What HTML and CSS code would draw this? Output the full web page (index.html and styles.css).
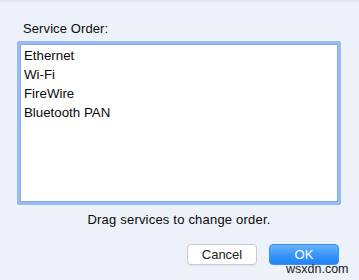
FILE: index.html
```html
<!DOCTYPE html>
<html>
<head>
<meta charset="utf-8">
<link rel="stylesheet" href="styles.css">
</head>
<body>
<div class="dialog">
  <div class="label">Service Order:</div>
  <ul class="list">
    <li>Ethernet</li>
    <li>Wi-Fi</li>
    <li>FireWire</li>
    <li>Bluetooth PAN</li>
  </ul>
  <div class="hint">Drag services to change order.</div>
  <div class="buttons">
    <button class="btn cancel">Cancel</button>
    <button class="btn ok">OK</button>
  </div>
  <div class="watermark">wsxdn.com</div>
</div>
</body>
</html>
```
FILE: styles.css
```css
html, body {
  margin: 0;
  padding: 0;
}
body {
  width: 359px;
  height: 280px;
  overflow: hidden;
  background: #edf1f9;
  font-family: "Liberation Sans", Arial, sans-serif;
  font-size: 13px;
  color: #0a0a0a;
}
.dialog {
  position: relative;
  height: 280px;
  box-sizing: border-box;
  padding: 21px 18px 0 17px;
  background: linear-gradient(to bottom, #dfe4ee 0, #e9eef7 3px, #edf1f9 6px);
}
.label {
  line-height: 16px;
  padding-left: 6px;
  letter-spacing: 0.1px;
}
.list {
  list-style: none;
  margin: 4px 0 0 0;
  padding: 2px 4px;
  height: 154px;
  background: #fff;
  border: 3px solid #97bbf2;
  border-radius: 2px;
  box-shadow: inset 0 0 0 1px #86aeea;
  font-size: 13.3px;
}
.list li {
  line-height: 19px;
  height: 19px;
}
.hint {
  margin-top: 7px;
  line-height: 16px;
  text-align: center;
  letter-spacing: 0.2px;
}
.buttons {
  margin-top: 16px;
  display: flex;
  justify-content: flex-end;
  gap: 12px;
  padding-right: 2px;
}
.btn {
  width: 70px;
  height: 21px;
  font-family: "Liberation Sans", Arial, sans-serif;
  font-size: 13px;
  border-radius: 4px;
  padding: 0;
  line-height: 19px;
}
.cancel {
  background: #fff;
  color: #222;
  border: 1px solid #c9cbd0;
  box-shadow: 0 1px 0 rgba(0,0,0,0.06);
}
.ok {
  background: linear-gradient(to bottom, #6ab3fb 0%, #3a96fb 50%, #1d84fa 100%);
  color: #fff;
  border: 1px solid #3d8ef0;
}
.watermark {
  position: absolute;
  left: 286px;
  top: 261px;
  font-size: 12.5px;
  line-height: 16px;
  color: #1b1b1b;
}
```
